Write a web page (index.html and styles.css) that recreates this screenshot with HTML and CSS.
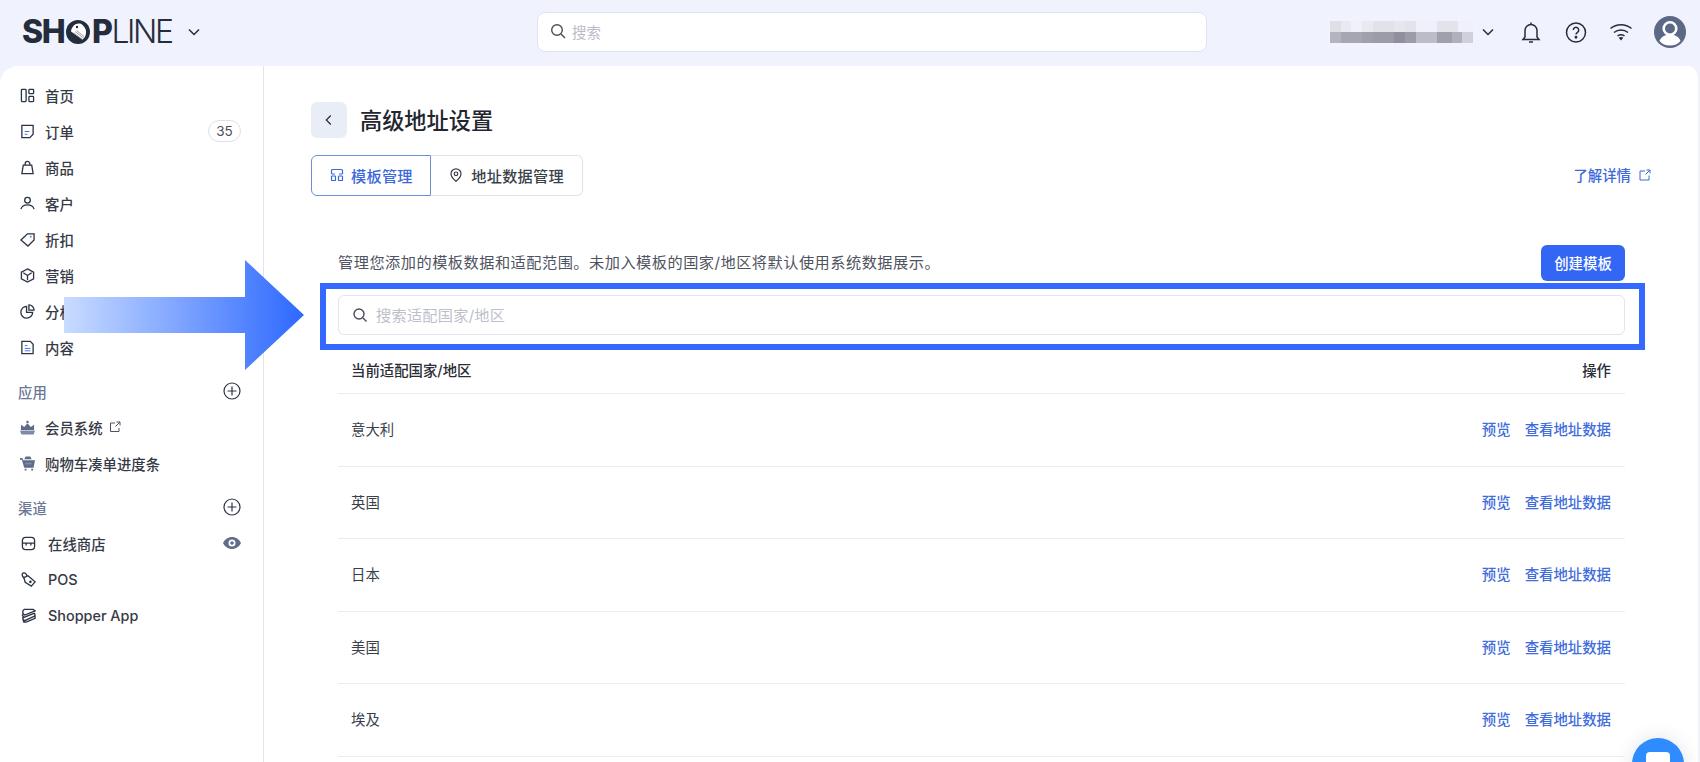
FILE: index.html
```html
<!DOCTYPE html>
<html lang="zh-CN">
<head>
<meta charset="utf-8">
<title>高级地址设置</title>
<link rel="stylesheet" href="styles.css">
</head>
<body>
<header class="topbar">
  <div class="brand">
    <span class="logo"><b>SH<span class="logo-o">O<svg viewBox="0 0 24 24"><circle cx="12" cy="12" r="12" fill="#252c3b"/><path d="M7 6.500C9 3.500 14 2.500 16.500 5c2.500 2 4 5 3.500 8.500-.3 2.500-1.500 4.500-3.500 6L5 11.500c.2-2 .8-3.500 2-5z" fill="#fff"/><circle cx="11" cy="7" r="1.200" fill="#252c3b"/><path d="M7.500 13l9 6.500M9 11.500l8.500 6.500M10.500 10.500l7.500 6" stroke="#8e94a3" stroke-width=".9"/></svg></span>P</b><span class="logo-line">LINE</span></span>
    <svg class="chev" viewBox="0 0 16 16"><path d="M3 5.500l5 5 5-5"/></svg>
  </div>
  <div class="top-search">
    <svg class="search-ico" viewBox="0 0 16 16"><circle cx="7" cy="7" r="5.300"/><path d="M11 11l4 4"/></svg>
    <span>搜索</span>
  </div>
  <div class="top-right">
    <div class="blurred"><div class="blur-a"></div><div class="blur-b"></div></div>
    <svg class="chev" viewBox="0 0 16 16"><path d="M3 5.500l5 5 5-5"/></svg>
    <svg class="tool" viewBox="0 0 24 24"><path d="M6 17V10.500a6 6 0 0 1 12 0V17l2 2.500H4z"/><path d="M10 22h4M12 2.500v2"/></svg>
    <svg class="tool" viewBox="0 0 24 24"><circle cx="12" cy="12.500" r="9.500"/><path d="M9.300 10a2.700 2.700 0 1 1 4.200 2.300c-1 .7-1.500 1.200-1.500 2.300"/><circle cx="12" cy="17.300" r=".7"/></svg>
    <svg class="tool" viewBox="0 0 24 24"><path d="M1.500 8.500c6-5 15-5 21 0M5 12.500c4-3.300 10-3.300 14 0M8.500 16c2-1.500 5-1.500 7 0"/><path class="solid" d="M12 20.500l-2.300-2.800c1.400-.8 3.200-.8 4.600 0z"/></svg>
    <svg class="avatar" viewBox="0 0 32 32"><circle cx="16" cy="16" r="16" fill="#5b6886"/><circle cx="16" cy="12.500" r="6.300" fill="none" stroke="#fff" stroke-width="2.600"/><path d="M5.500 25c1.500-4.500 5.500-6.300 10.500-6.300S25 20.500 26.500 25c-2.500 3-6 4.500-10.500 4.500S8 28 5.500 25z" fill="#fff"/></svg>
  </div>
</header>

<div class="panel">
  <aside class="sidebar">
    <nav class="nav-group">
      <a class="nav-row"><svg class="nav-ico" viewBox="0 0 16 16"><rect x="1.500" y="1.500" width="5" height="13" rx=".8"/><rect x="9.500" y="1.500" width="5" height="4.500" rx=".8"/><rect x="9.500" y="9" width="5" height="5.500" rx=".8"/></svg><span>首页</span></a>
      <a class="nav-row"><svg class="nav-ico" viewBox="0 0 16 16"><path d="M2 1.500h12v9.500l-3.500 3.500H2z"/><path class="acc" d="M5 8h5M5 11h3"/></svg><span>订单</span><em class="badge">35</em></a>
      <a class="nav-row"><svg class="nav-ico" viewBox="0 0 16 16"><path d="M3.500 5.500h9l1.500 9H2z"/><path d="M5.500 5.500V4a2.500 2.500 0 0 1 5 0v1.500"/></svg><span>商品</span></a>
      <a class="nav-row"><svg class="nav-ico" viewBox="0 0 16 16"><circle cx="8" cy="4.500" r="3"/><path d="M1 14c.8-3 3.500-4.500 7-4.500s6.200 1.500 7 4.500"/></svg><span>客户</span></a>
      <a class="nav-row"><svg class="nav-ico" viewBox="0 0 16 16"><path d="M1 8.500L8 2h7v6.500L8.500 15z"/><circle class="acc" cx="11.500" cy="5" r=".6"/></svg><span>折扣</span></a>
      <a class="nav-row"><svg class="nav-ico" viewBox="0 0 16 16"><path d="M8 1l6.500 3.500v7L8 15l-6.500-3.500v-7z"/><path d="M3.500 5L8 8v5M12.500 5L8 8"/></svg><span>营销</span></a>
      <a class="nav-row"><svg class="nav-ico" viewBox="0 0 16 16"><path d="M7 2.500a6.300 6.300 0 1 0 6.500 6.500H7z"/><path d="M9.500 1a5.500 5.500 0 0 1 5.500 5.500H9.500z"/></svg><span>分析</span></a>
      <a class="nav-row"><svg class="nav-ico" viewBox="0 0 16 16"><path d="M2 1.500h9l3 3v10H2z"/><path class="acc" d="M5 6h3M5 9h6M5 11.500h6"/></svg><span>内容</span></a>
    </nav>

    <div class="nav-head"><span>应用</span><svg class="plus" viewBox="0 0 18 18"><circle cx="9" cy="9" r="8"/><path d="M9 4.500v9M4.500 9h9"/></svg></div>
    <nav>
      <a class="nav-row"><svg class="nav-ico" viewBox="0 0 16 16"><path class="grey" d="M1 5l3.500 2.500L8 3.500l3.500 4L15 5v6H1z"/><circle class="grey" cx="8" cy="2" r="1.300"/><path class="pale" d="M0 11.500h16l-1.500 4h-13z"/></svg><span>会员系统</span><svg class="ext" viewBox="0 0 12 12"><path d="M6 2H1.500v8.500H10V7M7.500 1H11v3.500M11 1L6.500 5.500"/></svg></a>
      <a class="nav-row"><svg class="nav-ico" viewBox="0 0 16 16"><path class="grey" d="M0 2h2.500l1 2.500H16l-1.500 8H4.500L2 4H0zM5 13.500h2V15.500H5zM12 13.500h2V15.500h-2zM6 .5h5l1.500 3h-8z"/><rect class="pale" x="5.500" y="7.200" width="7" height="1.800"/></svg><span>购物车凑单进度条</span></a>
    </nav>

    <div class="nav-head"><span>渠道</span><svg class="plus" viewBox="0 0 18 18"><circle cx="9" cy="9" r="8"/><path d="M9 4.500v9M4.500 9h9"/></svg></div>
    <nav class="channels">
      <a class="nav-row"><svg class="nav-ico" viewBox="0 0 16 16"><rect x="1.500" y="1.500" width="13" height="13" rx="3.500"/><path d="M1.500 7.500h13M5.500 7.500v2.500M10.500 7.500v2.500"/></svg><span>在线商店</span><svg class="eye" viewBox="0 0 18 12"><path fill-rule="evenodd" d="M9 0c4 0 7.300 2.500 9 6-1.700 3.500-5 6-9 6S1.700 9.500 0 6c1.700-3.500 5-6 9-6zm0 2.500a3.500 3.500 0 1 0 0 7 3.500 3.500 0 0 0 0-7z"/><circle cx="9" cy="6" r="1.800"/></svg></a>
      <a class="nav-row"><svg class="nav-ico" viewBox="0 0 16 16"><path d="M3 6l4.500-2 7.500 6.500-4 4.500L4.500 11z"/><path d="M4 6.500C1 5.500.5 2 2.500 1 4.500.3 6 2.500 6.500 4.500"/><circle cx="10" cy="10.500" r=".7"/></svg><span>POS</span></a>
      <a class="nav-row"><svg class="nav-ico" viewBox="0 0 16 16"><path d="M3.500 1.500h9.500L15 3 4 7.500 2 6V3zM2.500 6.500L1.500 8 3 10 14.500 5.500M14.500 5.500l.5 3L4 13.500 2 12V9.500M2 12l1 3h2.500L15 11V8.500"/></svg><span>Shopper App</span></a>
    </nav>
  </aside>

  <main class="main">
    <div class="title-row">
      <button class="back"><svg viewBox="0 0 12 12"><path d="M7.800 1.500L3.300 6l4.500 4.500"/></svg></button>
      <h1>高级地址设置</h1>
    </div>
    <div class="tab-row">
      <div class="tabs">
        <div class="tab active"><svg viewBox="0 0 14 14"><path d="M1.500 6V2.500a1 1 0 0 1 1-1h9a1 1 0 0 1 1 1V6M1.500 6h3.500M9 6h3.500"/><rect x="1.500" y="8" width="4" height="4.500" rx=".6"/><rect x="8.500" y="8" width="4" height="4.500" rx=".6"/></svg><span>模板管理</span></div>
        <div class="tab"><svg viewBox="0 0 14 14"><path d="M7 13.300S2 9.300 2 5.800a5 5 0 0 1 10 0c0 3.500-5 7.500-5 7.500z"/><circle cx="7" cy="5.800" r="1.800"/></svg><span>地址数据管理</span></div>
      </div>
      <a class="learn"><span>了解详情</span><svg viewBox="0 0 12 12"><path d="M6 2H1v9h9V6.500M7.500 1H11v3.500M11 1L6.500 5.500"/></svg></a>
    </div>

    <section class="content">
      <div class="desc-row">
        <p>管理您添加的模板数据和适配范围。未加入模板的国家/地区将默认使用系统数据展示。</p>
        <button class="create">创建模板</button>
      </div>
      <div class="filter">
        <svg class="search-ico" viewBox="0 0 16 16"><circle cx="7" cy="7" r="5"/><path d="M11 11l3.500 3.500"/></svg>
        <span>搜索适配国家/地区</span>
        <div class="highlight"></div>
      </div>
      <div class="table">
        <div class="thead"><span>当前适配国家/地区</span><span>操作</span></div>
        <div class="tr"><span>意大利</span><div class="ops"><a>预览</a><a>查看地址数据</a></div></div>
        <div class="tr"><span>英国</span><div class="ops"><a>预览</a><a>查看地址数据</a></div></div>
        <div class="tr"><span>日本</span><div class="ops"><a>预览</a><a>查看地址数据</a></div></div>
        <div class="tr"><span>美国</span><div class="ops"><a>预览</a><a>查看地址数据</a></div></div>
        <div class="tr"><span>埃及</span><div class="ops"><a>预览</a><a>查看地址数据</a></div></div>
      </div>
    </section>
  </main>
</div>

<svg class="arrow" viewBox="0 0 240 110">
  <defs><linearGradient id="arrowFill" x1="0" y1="0" x2="1" y2="0"><stop offset="0" stop-color="#c9dcff"/><stop offset="1" stop-color="#2d68ff"/></linearGradient></defs>
  <path d="M0 37H181V0L240 55 181 110V73H0z" fill="url(#arrowFill)"/>
</svg>
<div class="chat"><i></i></div>
</body>
</html>
```
FILE: styles.css
```css
* { box-sizing: border-box; }
html, body { height: 100%; margin: 0; overflow: hidden; }
body {
  position: relative;
  width: 1700px;
  height: 762px;
  display: flex;
  flex-direction: column;
  background: #f0f2fe;
  color: #2a2f3c;
  font-family: Inter, "Noto Sans CJK SC", "Noto Sans", sans-serif;
  font-size: 14.4px;
}
svg { display: block; flex: none; }
a { color: inherit; text-decoration: none; }
button { font: inherit; border: 0; padding: 0; }

/* top bar */
.topbar { height: 66px; flex: none; display: flex; align-items: center; padding: 0 14px 2px 22px; }
.brand { width: 515px; display: flex; align-items: center; gap: 14px; }
.logo { font-size: 32px; line-height: 1; font-weight: 300; letter-spacing: -1.5px; color: #252c3b; white-space: nowrap; }
.logo b { font-weight: 800; }
.logo-line { letter-spacing: -2.400px; }
.logo-o { position: relative; display: inline-block; width: 24px; margin: 0 2px; color: transparent; letter-spacing: 0; overflow: visible; }
.logo-o svg { position: absolute; left: 0; top: 4px; width: 24px; height: 24px; }
.chev { width: 16px; height: 16px; fill: none; stroke: #252c3b; stroke-width: 1.500; }
.top-search {
  width: 670px; height: 40px; display: flex; align-items: center; gap: 6px; padding: 0 0 2px 12px;
  background: #fff; border: 1.500px solid #dfe2f0; border-radius: 8px; color: #b9bcc8;
}
.search-ico { width: 16px; height: 16px; fill: none; stroke: #4a4e5a; stroke-width: 1.400; }
.top-right { margin-left: auto; display: flex; align-items: center; gap: 21px; }
.blurred { width: 143px; height: 22px; margin: 0 -12px 0 -3px; display: flex; flex-direction: column; }
.blur-a, .blur-b { height: 11px; }
.blur-a { background: linear-gradient(90deg, #dfdfe8 0 11px, #e9e9f1 11px 21px, #f0f1fa 21px 32px, #e9e9f2 32px 43px, #e2e2ea 43px 64px, #e6e6ee 64px 75px, #e3e3eb 75px 86px, #eff0f9 86px 107px, #e3e3eb 107px 128px, #eff0f9 128px); }
.blur-b { background: linear-gradient(90deg, #b4b4c0 0 11px, #a6a6b2 11px 32px, #a0a0ad 32px 43px, #9c9ca9 43px 64px, #8f8f9d 64px 75px, #9c9ca9 75px 86px, #bcbcc8 86px 75%, #a0a0ac 75% 85%, #b0b0bc 85% 92%, #d0d0da 92%); }
.top-right .chev { margin-left: -2px; margin-right: 2px; }
.tool { width: 24px; height: 24px; fill: none; stroke: #252c3b; stroke-width: 1.500; }
.tool .solid { fill: #252c3b; stroke: none; }
.avatar { width: 32px; height: 32px; }

/* white panel */
.panel {
  flex: 1; min-height: 0; display: flex; background: #fff;
  border-radius: 18px 12px 0 0; border-right: 2px solid #f1f2f7; overflow: hidden;
}
.sidebar { width: 264px; flex: none; padding: 12px 22px 0 20px; border-right: 1.500px solid #e3e5ec; }
.nav-row { height: 36px; display: flex; align-items: center; gap: 10px; padding-bottom: 2px; color: #363a47; font-weight: 500; white-space: nowrap; }
.nav-ico { width: 15px; height: 15px; fill: none; stroke: #2c3345; stroke-width: 1.400; }
.nav-ico .acc { stroke: #3f6fe8; stroke-width: 1; }
.nav-ico .grey { fill: #5f6b88; stroke: none; }
.nav-ico .pale { fill: #7f8ba6; stroke: none; }
.channels .nav-row { gap: 12px; }
.channels .nav-ico { margin-left: 1px; }
.badge {
  margin-left: auto; width: 33px; height: 22px; border: 1px solid #dfe1e7; border-radius: 11px;
  font-style: normal; font-weight: 400; font-size: 13.500px; line-height: 20px; text-align: center; color: #4a4f5c;
}
.ext { width: 12px; height: 12px; margin-left: -4px; fill: none; stroke: #4d5361; stroke-width: 1; }
.eye { width: 18px; height: 12px; margin-left: auto; fill: #616d8a; }
.nav-head { height: 36px; margin: 8px 0 0 -2px; padding-bottom: 2px; display: flex; align-items: center; justify-content: space-between; color: #6c7896; font-weight: 500; }
.plus { width: 18px; height: 18px; fill: none; stroke: #2c3345; stroke-width: 1.200; }

/* main column */
.main { flex: 1; min-width: 0; padding: 36px 47px 0 47px; }
.title-row { display: flex; align-items: center; gap: 13px; height: 36px; }
.back { width: 36px; height: 36px; border-radius: 6px; background: #e9edf6; display: flex; align-items: center; justify-content: center; }
.back svg { width: 12px; height: 12px; fill: none; stroke: #2a2f3c; stroke-width: 1.300; }
h1 { margin: 0 0 3px; font-size: 22.200px; font-weight: 500; color: #23262f; }
.tab-row { margin-top: 17px; display: flex; justify-content: space-between; align-items: center; }
.tabs { display: flex; height: 41px; }
.tab {
  display: flex; align-items: center; gap: 8px; padding: 0 18px 2px 18px; color: #3b3f4b; font-size: 15.200px; letter-spacing: .25px; font-weight: 500;
  border: 1px solid #e0e2e9; border-left: 0; border-radius: 0 6px 6px 0;
}
.tab svg { width: 14px; height: 14px; fill: none; stroke: currentColor; stroke-width: 1.200; }
.tab.active { padding: 0 17.500px 2px 18px; color: #3c68db; gap: 7px; border: 1px solid #6a8ed8; border-radius: 6px 0 0 6px; }
.learn { display: flex; align-items: center; gap: 8px; padding-bottom: 2px; color: #3c68db; font-weight: 500; }
.learn svg { width: 12px; height: 12px; fill: none; stroke: #3c68db; stroke-width: 1; }
.content { padding: 0 26px 0 27px; }
.desc-row { margin-top: 49px; display: flex; justify-content: space-between; align-items: center; }
.desc-row p { margin: 0 0 4px; color: #4f5360; font-size: 15.200px; letter-spacing: .5px; }
.create { width: 84px; height: 36px; padding-bottom: 2px; border-radius: 6px; background: #3366f5; color: #fff; font-weight: 500; }
.filter {
  position: relative; margin-top: 14px; height: 40px; display: flex; align-items: center; gap: 8px; padding: 0 0 2px 13px;
  border: 1.500px solid #e3e5ee; border-radius: 6px; color: #bdbfca; font-size: 15.200px; letter-spacing: .25px;
}
.filter .search-ico { margin-top: 2px; }
.highlight { position: absolute; left: -19.500px; right: -20.500px; top: -13.500px; bottom: -15.500px; border: 6px solid #3568ff; }
.table { margin-top: 14px; }
.thead { height: 45px; padding: 0 14px 3px 13px; display: flex; align-items: center; justify-content: space-between; font-weight: 500; color: #2a2d36; border-bottom: 1px solid #ebedf2; }
.tr { height: 72.500px; padding: 0 14px 2px 13px; display: flex; align-items: center; justify-content: space-between; color: #3b3f4b; border-bottom: 1px solid #ebedf2; }
.ops { display: flex; gap: 14px; color: #3f6ddc; font-weight: 500; }

/* overlays */
.arrow { position: absolute; left: 64px; top: 260px; width: 240px; height: 110px; filter: blur(.6px); }
.chat { position: absolute; left: 1632px; top: 738px; width: 52px; height: 52px; border-radius: 50%; background: #2e8cff; box-shadow: 0 0 18px rgba(40, 60, 100, .14); }
.chat i { position: absolute; left: 14px; top: 14px; width: 24px; height: 22px; border-radius: 4px; background: #fff; }
```
